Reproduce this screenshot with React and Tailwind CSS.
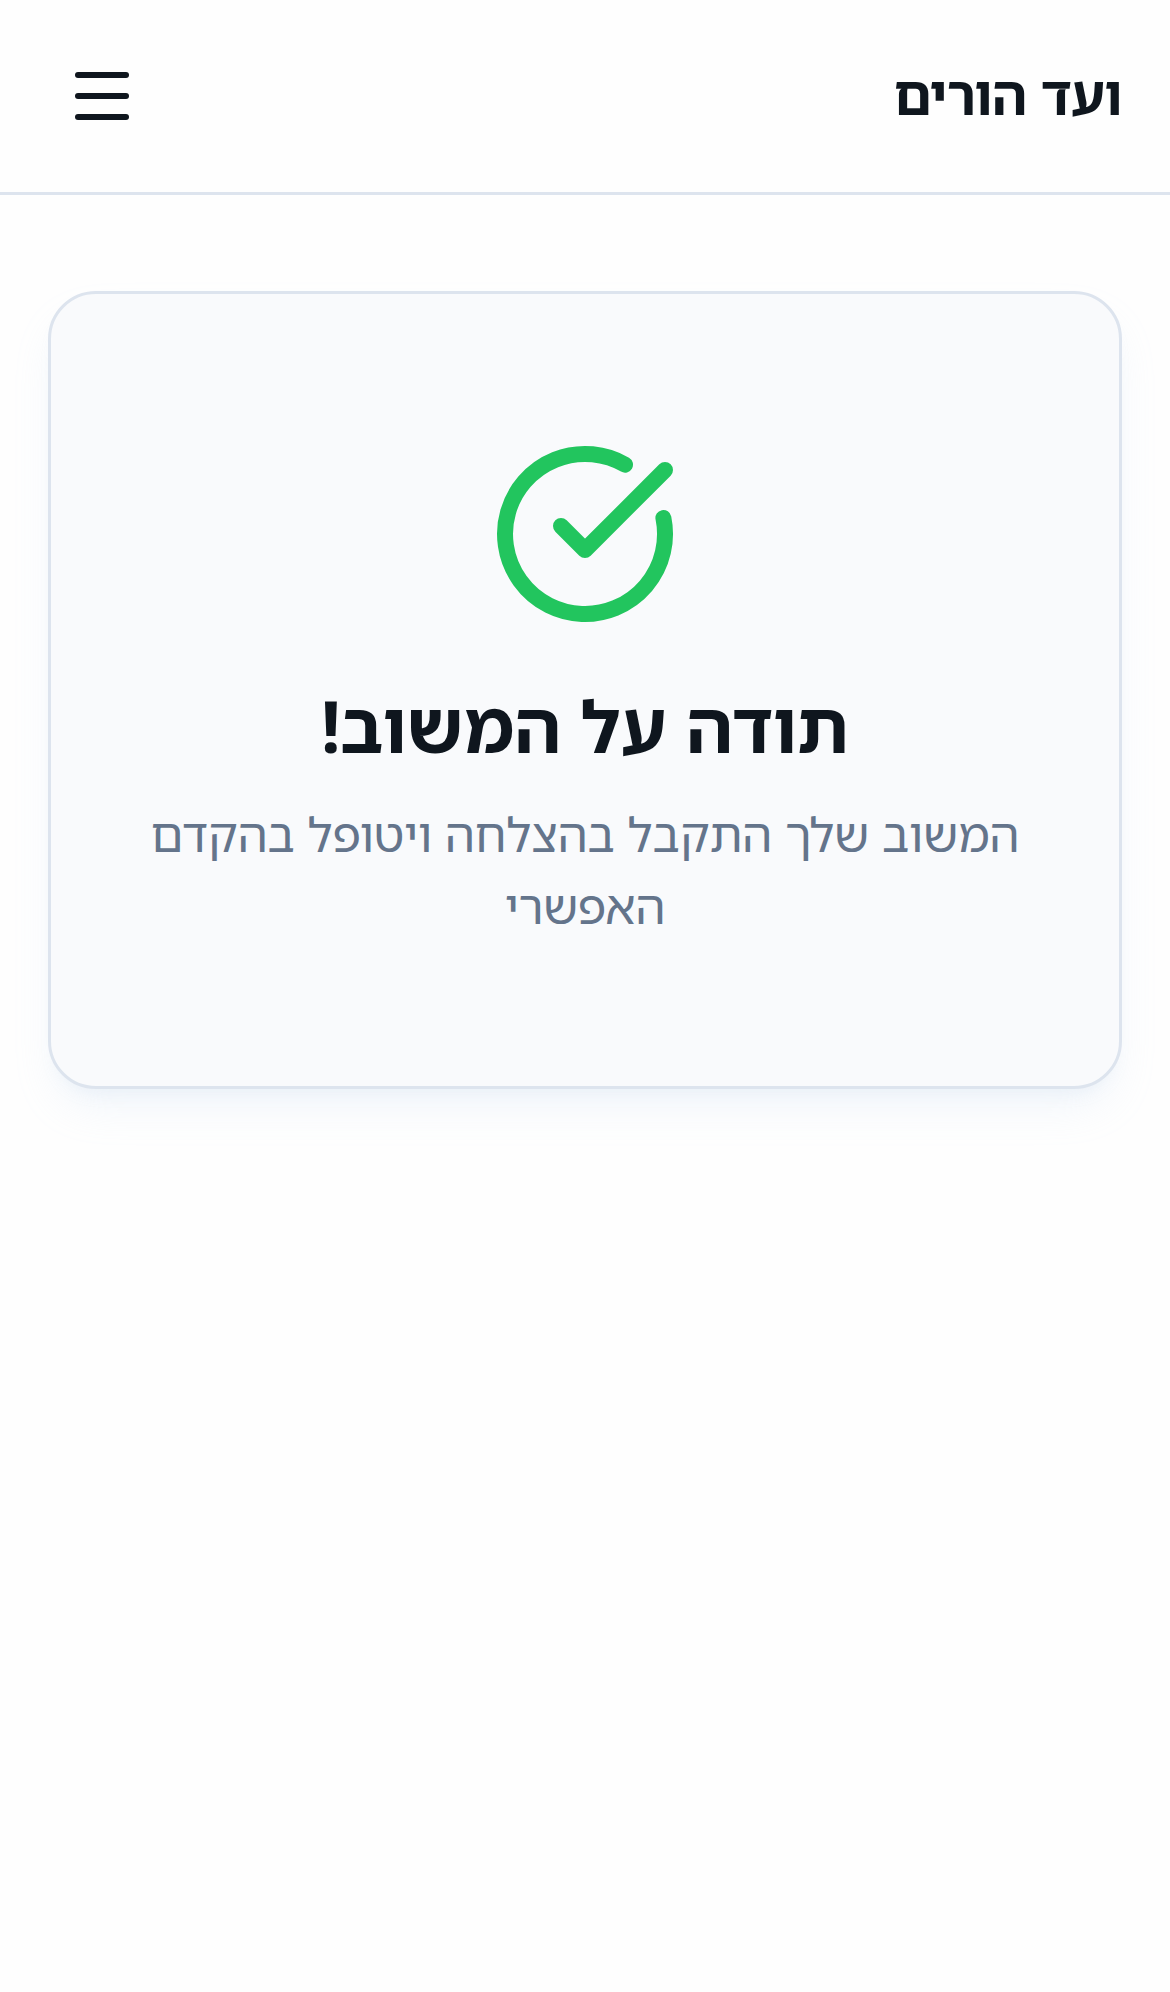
import { CircleCheckBig, Menu } from "lucide-react";

function Header() {
  return (
    <header className="flex h-[195px] items-center justify-between border-b-[3px] border-[#dde4ee] pr-12 pl-[66px]">
      <h1 className="pb-[5px] text-[54px] leading-[84px] font-[670] tracking-[-0.6px]">ועד הורים</h1>
      <button aria-label="תפריט">
        <Menu size={72} />
      </button>
    </header>
  );
}

function ThankYouCard() {
  return (
    <section className="flex flex-col items-center rounded-[48px] border-[3px] border-[#dde4ee] bg-[#f9fafc] px-[72px] py-36 text-center shadow-[0_24px_42px_-9px_rgba(190,215,240,0.22),0_12px_18px_-12px_rgba(190,210,230,0.25)]">
      <CircleCheckBig size={192} className="mb-12 text-[#22c55e]" />
      <h2 className="-mt-px mb-[25px] text-[72px] leading-[96px] font-[670]">תודה על המשוב!</h2>
      <p className="text-[48px] leading-[72px] tracking-[-0.2px] text-[#64748b]">
        המשוב שלך התקבל בהצלחה ויטופל בהקדם האפשרי
      </p>
    </section>
  );
}

export default function App() {
  return (
    <div dir="rtl" className="min-h-screen bg-[#fefefe] font-['Noto_Sans_Hebrew','Noto_Sans',sans-serif] text-[#0f161e]">
      <Header />
      <main className="px-12 pt-24">
        <ThankYouCard />
      </main>
    </div>
  );
}
